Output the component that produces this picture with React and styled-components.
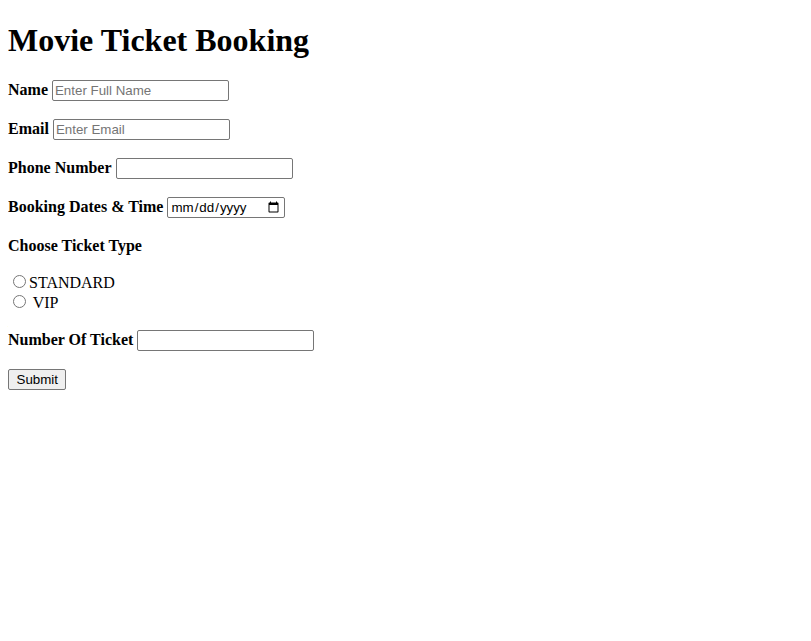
import React from 'react';
import styled, { createGlobalStyle } from 'styled-components';

const GlobalStyle = createGlobalStyle`
  body {
    margin: 8px;
    font-family: 'Liberation Serif', 'Times New Roman', serif;
    font-size: 16px;
    color: black;
    background: white;
  }
`;

const Title = styled.h1`
  font-size: 32px;
  font-weight: bold;
  margin: 13.5px 0 20.5px;
`;

const Row = styled.p`
  margin: ${(p) => p.$margin || '16px 0'};
`;

const Label = styled.label`
  font-weight: bold;
`;

const Field = styled.input`
  box-sizing: border-box;
  width: ${(p) => p.$width || 177}px;
  height: 21px;
  margin: 1px 0;
  padding: 1px 2px;
  border: 1px solid #767676;
  border-radius: 2px;
  font-family: 'Liberation Sans', Arial, sans-serif;
  font-size: 13.33px;
  color: black;
  background: white;
  vertical-align: baseline;

  &::placeholder {
    color: #757575;
  }
`;

const Radio = styled.input`
  margin: 3px 3px 0 5px;
  width: 13px;
  height: 13px;
`;

const SubmitButton = styled.button`
  box-sizing: border-box;
  height: 21px;
  padding: 1px 7.5px;
  border: 1px solid #767676;
  border-radius: 2px;
  background: #efefef;
  font-family: 'Liberation Sans', Arial, sans-serif;
  font-size: 13.33px;
  color: black;
`;

const App = () => (
  <>
    <GlobalStyle />
    <Title>Movie Ticket Booking</Title>
    <form onSubmit={(e) => e.preventDefault()}>
      <Row>
        <Label htmlFor="name">Name</Label> <Field id="name" type="text" placeholder="Enter Full Name" />
      </Row>
      <Row>
        <Label htmlFor="email">Email</Label> <Field id="email" type="email" placeholder="Enter Email" />
      </Row>
      <Row>
        <Label htmlFor="phone">Phone Number</Label> <Field id="phone" type="tel" />
      </Row>
      <Row>
        <Label htmlFor="date">Booking Dates &amp; Time</Label> <Field id="date" type="date" $width={118} />
      </Row>
      <Row $margin="18px 0 17px">
        <Label>Choose Ticket Type</Label>
      </Row>
      <Row $margin="17px 0">
        <Radio type="radio" name="ticket" value="standard" />STANDARD
        <br />
        <Radio type="radio" name="ticket" value="vip" /> VIP
      </Row>
      <Row>
        <Label htmlFor="count">Number Of Ticket</Label> <Field id="count" type="number" />
      </Row>
      <Row $margin="17px 0 16px">
        <SubmitButton type="submit">Submit</SubmitButton>
      </Row>
    </form>
  </>
);

export default App;
